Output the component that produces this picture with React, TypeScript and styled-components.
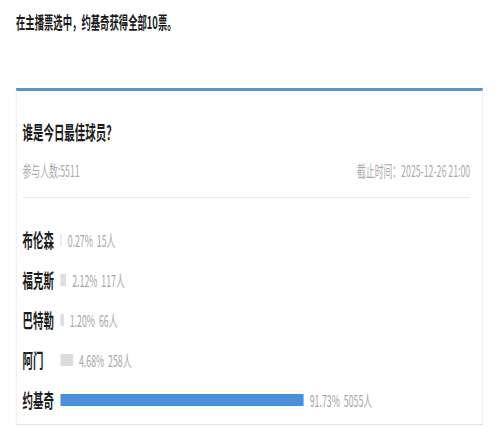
import React from "react";
import styled, { createGlobalStyle } from "styled-components";

// the reference is squeezed sideways, so the page is laid out wide and scaled down on x
const SQUEEZE = 0.55;
const TRACK = 482;

const GlobalStyle = createGlobalStyle`
  html, body {
    margin: 0;
    padding: 0;
    background: #fff;
    overflow: hidden;
  }
  body {
    font-family: "Noto Sans CJK SC", "Noto Sans", sans-serif;
  }
`;

const Page = styled.div`
  width: ${500 / SQUEEZE}px;
  box-sizing: border-box;
  padding: 11px 0 0 29px;
  transform: scaleX(${SQUEEZE});
  transform-origin: 0 0;
`;

const Lead = styled.div`
  font-size: 17px;
  line-height: 22px;
  font-weight: 700;
  color: #1a1a1a;
`;

const Card = styled.div`
  margin-top: 55px;
  width: 849px;
  box-sizing: border-box;
  background: #fff;
  border: 1px solid #e3e3e3;
  border-top: 3px solid #5a93c5;
  box-shadow: 0 1px 2px rgba(0, 0, 0, 0.06);
`;

const Header = styled.div`
  margin: 0 22px 0 11px;
  padding: 29px 0 17px;
  border-bottom: 1px solid #ebebeb;
`;

const Title = styled.div`
  font-size: 19px;
  line-height: 24px;
  font-weight: 700;
  color: #1c1c1c;
`;

const Meta = styled.div`
  margin-top: 16px;
  display: flex;
  justify-content: space-between;
  font-size: 16px;
  line-height: 20px;
  color: #ababab;
`;

const List = styled.div`
  padding: 22px 0 4px 11px;
`;

const Row = styled.div`
  display: flex;
  align-items: center;
  height: 40px;
`;

const Name = styled.div`
  width: 69px;
  flex: none;
  font-size: 19px;
  line-height: 24px;
  font-weight: 700;
  color: #1c1c1c;
`;

const Bar = styled.div<{ $lead: boolean }>`
  flex: none;
  height: 12px;
  min-width: 2px;
  background: ${(p) => (p.$lead ? "#4a8ede" : "#dcdcdc")};
`;

const Stat = styled.div`
  margin-left: 11px;
  font-size: 16px;
  line-height: 20px;
  color: #a6a6a6;
  white-space: pre;
`;

const options = [
  { name: "布伦森", pct: 0.27, votes: 15 },
  { name: "福克斯", pct: 2.12, votes: 117 },
  { name: "巴特勒", pct: 1.2, votes: 66 },
  { name: "阿门", pct: 4.68, votes: 258 },
  { name: "约基奇", pct: 91.73, votes: 5055 },
];

export default function App() {
  const top = Math.max(...options.map((o) => o.pct));
  return (
    <>
      <GlobalStyle />
      <Page>
        <Lead>在主播票选中，约基奇获得全部10票。</Lead>
        <Card>
          <Header>
            <Title>谁是今日最佳球员？</Title>
            <Meta>
              <span>参与人数:5511</span>
              <span>截止时间：2025-12-26 21:00</span>
            </Meta>
          </Header>
          <List>
            {options.map((o) => (
              <Row key={o.name}>
                <Name>{o.name}</Name>
                <Bar
                  $lead={o.pct === top}
                  style={{ width: `${(o.pct / 100) * TRACK}px` }}
                />
                <Stat>{`${o.pct.toFixed(2)}%  ${o.votes}人`}</Stat>
              </Row>
            ))}
          </List>
        </Card>
      </Page>
    </>
  );
}
